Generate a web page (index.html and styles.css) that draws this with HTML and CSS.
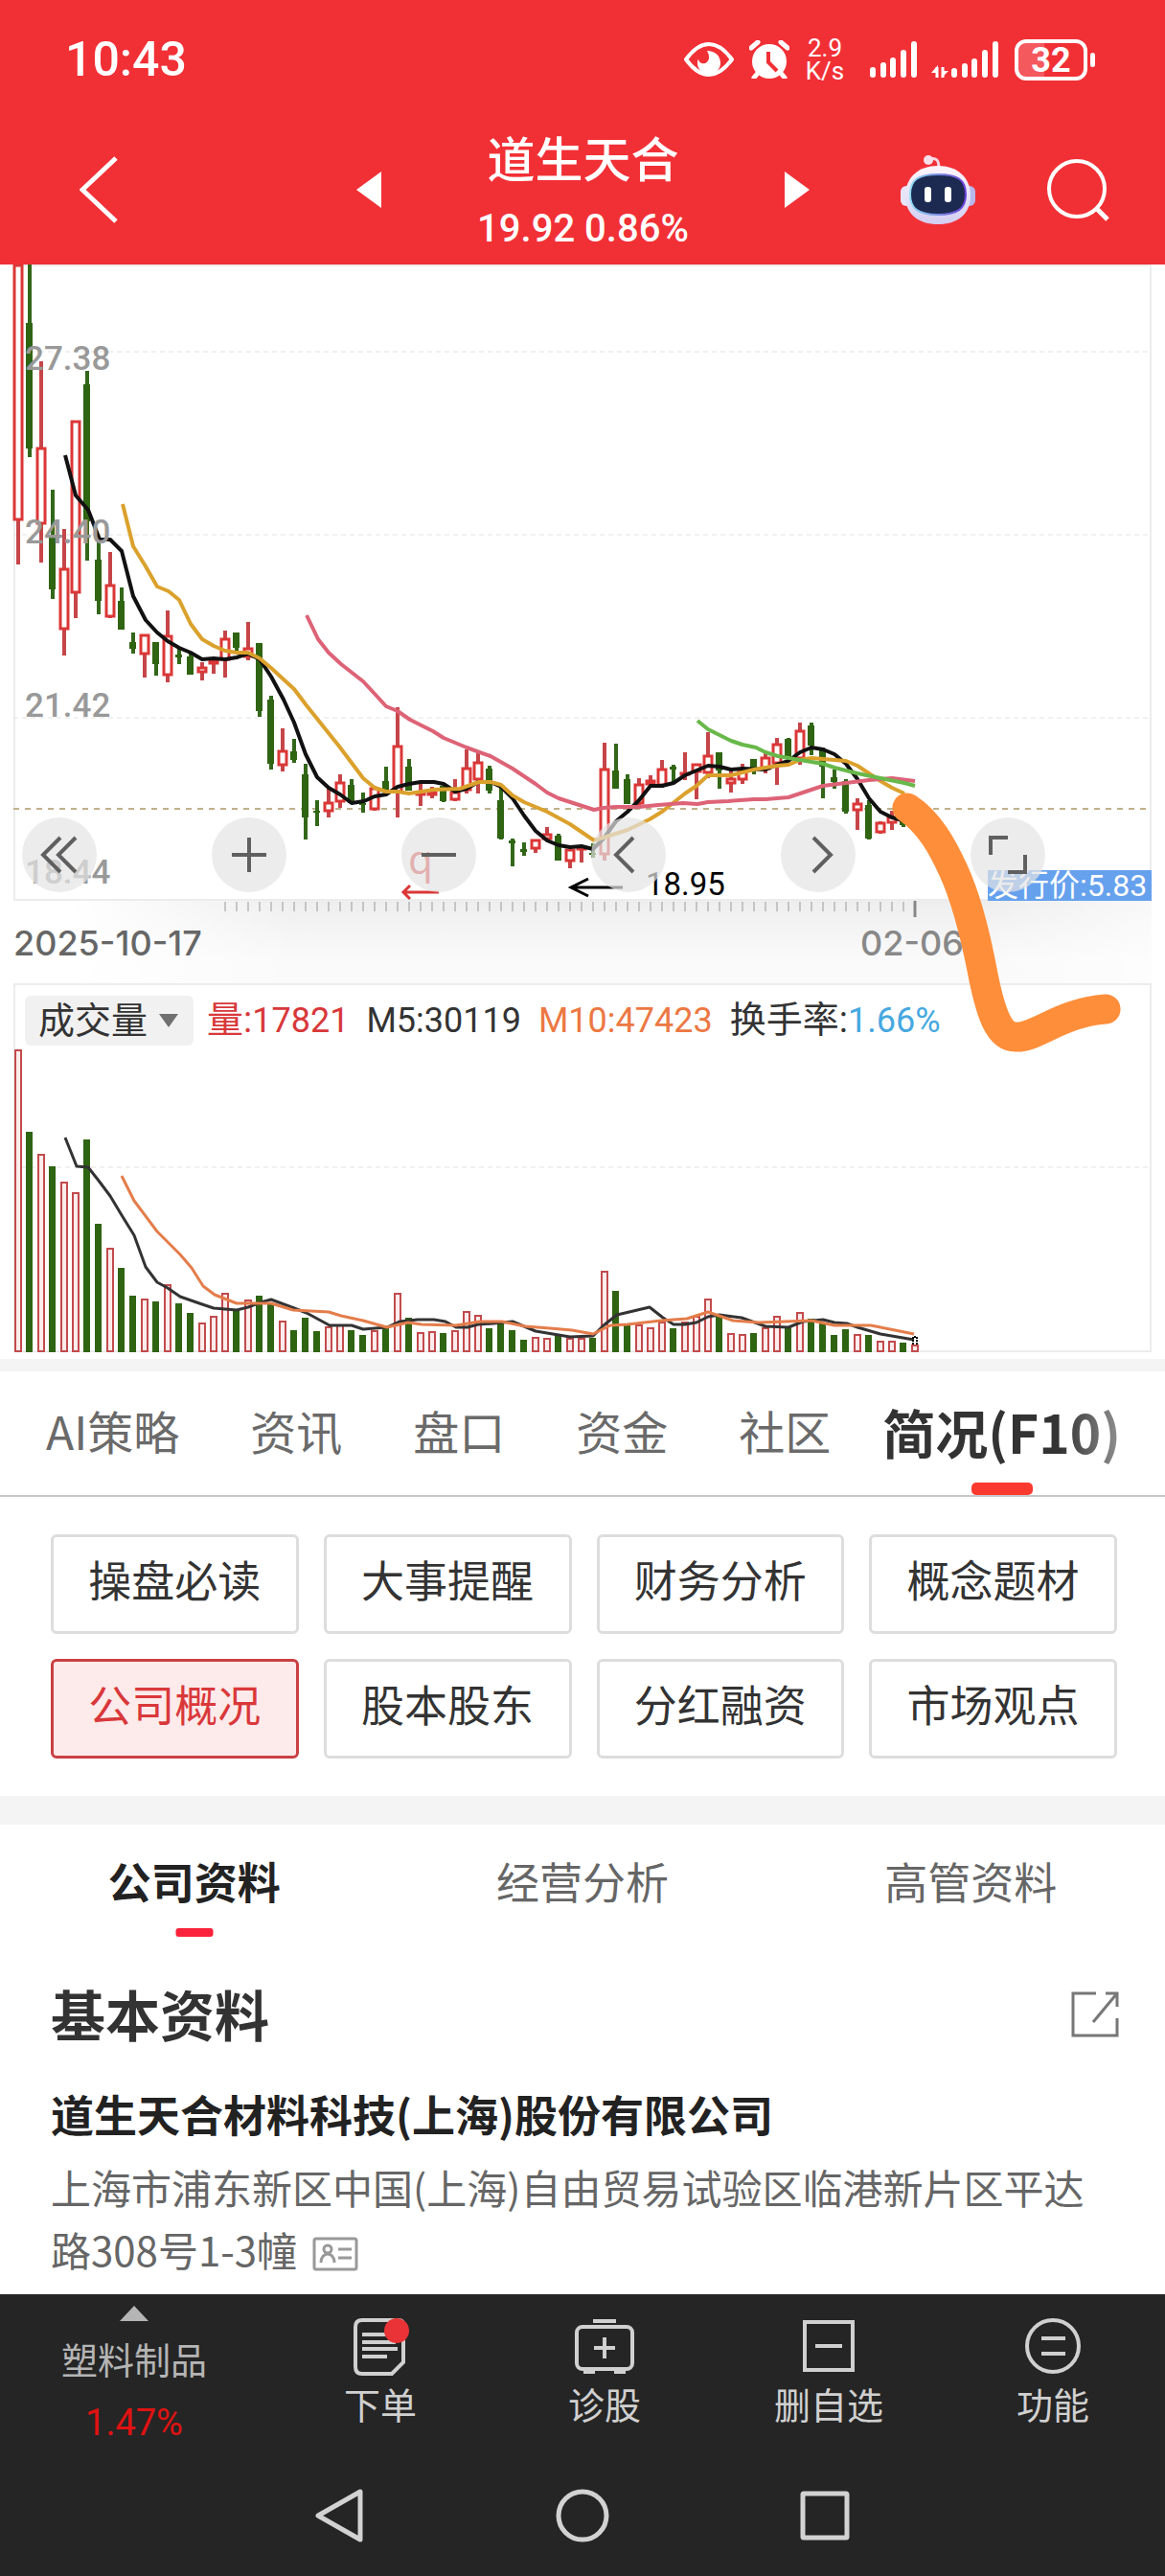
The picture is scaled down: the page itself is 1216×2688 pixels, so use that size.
FILE: index.html
```
<!DOCTYPE html>
<html lang="zh-CN">
<head>
  <meta charset="utf-8">
  <meta name="viewport" content="width=device-width, initial-scale=1">
  <title>道生天合</title>
  <link rel="stylesheet" href="styles.css">
</head>
<body>
  <header class="header">
    <div class="status-bar">
      <span class="status-time">10:43</span>
      <div class="status-icons">
        <svg class="icon-eye" width="52" height="36" viewBox="0 0 52 36">
          <path d="M2 18C10 7 17 2 26 2s16 5 24 16C42 29 35 34 26 34S10 29 2 18z" fill="none" stroke="#fff" stroke-width="4"/>
          <path d="M24 9c8 0 14 5 14 13 0 6-5 11-12 11S14 28 14 22c0-2 0-3 1-4 1 4 4 5 7 4 5-2 5-8 2-13z" fill="#fff"/>
        </svg>
        <svg class="icon-alarm" width="42" height="40" viewBox="0 0 42 40">
          <circle cx="21" cy="22" r="18" fill="#fff"/>
          <path d="M2 8l7-6M40 8l-7-6M10 33l-5 6M32 33l5 6" stroke="#fff" stroke-width="5" stroke-linecap="round"/>
          <path d="M20 12v11l9 9" fill="none" stroke="#f13036" stroke-width="4"/>
        </svg>
        <span class="net-speed">2.9<br>K/s</span>
        <svg class="icon-signal" width="50" height="40" viewBox="0 0 50 40">
          <path d="M3 31v5M14 26v10M24 21v15M35 13v23M46 4v32" stroke="#fff" stroke-width="6" stroke-linecap="round"/>
        </svg>
        <svg class="icon-signal" width="71" height="40" viewBox="0 0 71 40">
          <path d="M6 39V28M12 28v11" stroke="#fff" stroke-width="3"/>
          <path d="M0 34l7-8v8zM11 39l7-7h-7z" fill="#fff"/>
          <path d="M24 32v4M35 27v9M45 22v14M56 13v23M67 4v32" stroke="#fff" stroke-width="6" stroke-linecap="round"/>
        </svg>
        <span class="battery">32</span>
      </div>
    </div>
    <div class="title-bar">
      <button class="icon-button back" aria-label="返回">
        <svg width="40" height="70" viewBox="0 0 40 70"><path d="M38 2L3 35l35 33" fill="none" stroke="#fff" stroke-width="5"/></svg>
      </button>
      <div class="stock-switch">
        <button class="icon-button" aria-label="上一只"><svg width="26" height="38" viewBox="0 0 26 38"><path d="M26 0v38L0 19z" fill="#fff"/></svg></button>
        <div class="stock">
          <h1 class="stock-name">道生天合</h1>
          <p class="stock-price">19.92 0.86%</p>
        </div>
        <button class="icon-button" aria-label="下一只"><svg width="26" height="38" viewBox="0 0 26 38"><path d="M0 0v38l26-19z" fill="#fff"/></svg></button>
      </div>
      <div class="title-actions">
        <button class="icon-button" aria-label="智能助手">
          <svg width="78" height="74" viewBox="0 0 78 74">
            <defs>
              <linearGradient id="shell" x1="0" y1="0" x2="0" y2="1">
                <stop offset="0" stop-color="#fdf5fb"/>
                <stop offset="0.6" stop-color="#e2e0f8"/>
                <stop offset="1" stop-color="#d3cdf0"/>
              </linearGradient>
              <linearGradient id="rim" x1="0" y1="0" x2="1" y2="0">
                <stop offset="0" stop-color="#8fdcf2"/>
                <stop offset="1" stop-color="#6a3fd8"/>
              </linearGradient>
            </defs>
            <path d="M30 5c7-2 10 1 10 9" fill="none" stroke="#f6d6e4" stroke-width="3"/>
            <circle cx="29" cy="6" r="5" fill="#f8dfea"/>
            <rect x="0" y="33" width="14" height="21" rx="6" fill="#e8e4fa"/>
            <rect x="64" y="33" width="14" height="21" rx="6" fill="#b9b6ec"/>
            <path d="M39 12c20 0 34 12 34 31 0 20-14 30-34 30S5 63 5 43c0-19 14-31 34-31z" fill="url(#shell)"/>
            <path d="M39 21c20 0 29 5 29 21 0 15-9 21-29 21s-29-6-29-21c0-16 9-21 29-21z" fill="#1c2950" stroke="url(#rim)" stroke-width="2"/>
            <rect x="25" y="34" width="7" height="16" rx="3" fill="#fff"/>
            <rect x="46" y="34" width="7" height="16" rx="3" fill="#fff"/>
          </svg>
        </button>
        <button class="icon-button" aria-label="搜索">
          <svg width="66" height="66" viewBox="0 0 66 66"><circle cx="32" cy="32" r="29" fill="none" stroke="#fff" stroke-width="4"/><path d="M52 52l12 12" stroke="#fff" stroke-width="5"/></svg>
        </button>
      </div>
    </div>
  </header>

  <main>
    <section class="charts">
      <div class="plot">
        <svg id="priceChart" class="plot-svg" viewBox="14 276 1188 664">
          <g class="grid">
            <path d="M14 367H1202M14 558H1202M14 749H1202"/>
          </g>
          <path class="cost-line" d="M14 844H1202"/>
          <g id="candles"></g>
          <polyline class="line ma-black" points="68,475 79,517 92,532 104,563 115,563 127,575 139,622 152,647 164,660 175,669 187,676 199,681 211,688 223,687 235,688 247,686 259,682 271,688 283,706 296,730 307,754 319,787 331,811 343,822 355,829 367,838 380,836 391,831 403,829 415,821 427,818 439,816 453,816 463,818 475,826 487,823 499,816 512,816 523,821 535,833 547,851 559,867 571,877 583,882 595,884 607,883 619,886 630,875 643,857 655,847 667,835 679,820 691,820 703,817 715,809 727,804 739,799 751,800 763,803 775,802 799,803 811,798 823,794 835,785 847,780 859,782 871,787 883,797 895,813 907,833 919,847 931,853 942,856"/>
          <polyline class="line ma-gold" points="128,526 139,570 152,591 164,612 176,617 187,626 199,651 211,667 223,674 235,679 247,681 259,681 271,687 283,697 296,709 307,719 319,735 331,750 355,780 379,812 391,822 403,826 415,826 427,828 440,826 453,824 480,823 500,816 512,816 523,819 535,830 547,837 571,847 595,860 620,877 630,874 655,866 678,855 691,847 715,828 727,820 739,809 763,809 787,803 811,799 823,798 835,793 847,791 871,793 883,794 895,799 907,807 919,815 931,822 944,828"/>
          <polyline class="line ma-pink" points="320,642 332,667 343,681 356,693 379,711 392,725 403,737 415,742 428,751 452,763 463,770 487,780 512,789 535,802 559,818 571,827 583,833 620,845 630,843 643,842 667,842 687,840 713,838 728,839 739,837 760,836 787,834 799,834 823,832 835,828 859,820 883,817 907,814 931,812 955,815"/>
          <polyline class="line ma-green" points="728,752 739,761 751,767 763,773 775,777 789,780 799,785 812,789 835,793 859,797 871,801 895,807 919,812 944,817 955,820"/>
          <g class="scale">
            <text x="26" y="386">27.38</text>
            <text x="26" y="567">24.40</text>
            <text x="26" y="748">21.42</text>
            <text x="26" y="922">18.44</text>
          </g>
          <text class="mark-q" x="426" y="912">q</text>
          <path class="arrow arrow-red" d="M458 931H422M428 924l-7 7 7 7"/>
          <path class="arrow arrow-black" d="M650 926H597M614 917l-18 9 18 9"/>
          <text class="low-price" x="674" y="934">18.95</text>
          <rect x="1031" y="908" width="171" height="32" fill="#66a1ed"/>
          <text class="issue-price" x="1031" y="935">发行价:5.83</text>
        </svg>
        <div class="chart-controls">
          <button class="round-button" aria-label="最早"><svg width="40" height="40" viewBox="0 0 40 40"><path d="M21 2L3 20l18 18M37 2L19 20l18 18"/></svg></button>
          <button class="round-button" aria-label="放大"><svg width="40" height="40" viewBox="0 0 40 40"><path d="M2 20h36M20 2v36"/></svg></button>
          <button class="round-button" aria-label="缩小"><svg width="40" height="40" viewBox="0 0 40 40"><path d="M2 20h36"/></svg></button>
          <button class="round-button" aria-label="左移"><svg width="40" height="40" viewBox="0 0 40 40"><path d="M25 2L7 20l18 18"/></svg></button>
          <button class="round-button" aria-label="右移"><svg width="40" height="40" viewBox="0 0 40 40"><path d="M15 2l18 18-18 18"/></svg></button>
          <button class="round-button" aria-label="全屏"><svg width="40" height="40" viewBox="0 0 40 40"><path d="M2 20V2h18M38 20v18H20"/></svg></button>
        </div>
      </div>

      <div class="date-axis">
        <svg class="ticks" viewBox="14 940 1188 18"><g id="ticks"></g></svg>
        <span class="date-start">2025-10-17</span>
        <span class="date-end">02-06</span>
      </div>

      <div class="plot volume">
        <div class="volume-head">
          <span class="select-wrap">
            <select class="select" aria-label="指标">
              <option>成交量</option>
            </select>
          </span>
          <span class="stat up"><b>量:</b>17821</span>
          <span class="stat">M5:30119</span>
          <span class="stat m10">M10:47423</span>
          <span class="stat"><b>换手率:</b><i>1.66%</i></span>
        </div>
        <svg class="plot-svg" viewBox="14 1090 1188 320">
          <g class="grid"><path d="M14 1217H1202"/></g>
          <g id="volumes"></g>
          <polyline class="line vol-black" points="68,1186 80,1216 92,1217 103,1231 115,1247 127,1267 140,1288 152,1321 164,1337 175,1343 188,1352 211,1360 223,1364 247,1366 259,1363 272,1358 283,1355 307,1364 320,1369 344,1382 367,1382 379,1386 404,1384 417,1378 436,1376 453,1376 465,1378 476,1384 488,1384 499,1381 515,1380 535,1378 547,1383 559,1388 595,1394 619,1393 630,1382 644,1371 678,1363 692,1374 703,1381 715,1381 727,1379 739,1373 751,1371 774,1374 799,1383 823,1384 838,1378 859,1376 871,1379 884,1380 895,1384 919,1391 954,1397"/>
          <polyline class="line vol-orange" points="127,1226 140,1252 164,1284 188,1308 200,1322 212,1341 224,1350 247,1359 283,1359 306,1366 343,1368 356,1372 379,1377 404,1384 426,1379 440,1381 476,1382 501,1378 524,1378 548,1383 574,1385 597,1387 619,1391 637,1382 655,1381 690,1377 717,1375 739,1368 765,1377 792,1379 847,1377 871,1382 909,1382 954,1391"/>
          <path d="M953 1402v-8h4v8" fill="none" stroke="#000" stroke-width="2" stroke-dasharray="2 1"/>
        </svg>
      </div>

      <!-- hand drawn trend -->
      <svg class="doodle" viewBox="0 276 1216 1141">
        <path d="M947 843C970 858 984 884 995 908C1011 943 1020 985 1027 1022C1034 1055 1042 1082 1060 1082C1080 1084 1108 1056 1154 1053"/>
      </svg>
    </section>

    <nav class="tabs">
      <button class="tab">AI策略</button>
      <button class="tab">资讯</button>
      <button class="tab">盘口</button>
      <button class="tab">资金</button>
      <button class="tab">社区</button>
      <button class="tab active">简况(F10)</button>
    </nav>

    <div class="topics">
      <button class="topic">操盘必读</button>
      <button class="topic">大事提醒</button>
      <button class="topic">财务分析</button>
      <button class="topic">概念题材</button>
      <button class="topic active">公司概况</button>
      <button class="topic">股本股东</button>
      <button class="topic">分红融资</button>
      <button class="topic">市场观点</button>
    </div>

    <section class="company">
      <nav class="subtabs">
        <button class="subtab active">公司资料</button>
        <button class="subtab">经营分析</button>
        <button class="subtab">高管资料</button>
      </nav>
      <div class="section-head">
        <h2 class="section-title">基本资料</h2>
        <button class="icon-button" aria-label="分享">
          <svg width="50" height="48" viewBox="0 0 50 48"><path d="M26 2H2v44h46V28M36 2h12v14M48 2L23 32" fill="none" stroke="#777" stroke-width="3"/></svg>
        </button>
      </div>
      <h3 class="company-name">道生天合材料科技(上海)股份有限公司</h3>
      <p class="address">上海市浦东新区中国(上海)自由贸易试验区临港新片区平达路308号1-3幢
        <svg class="card-icon" width="48" height="36" viewBox="0 0 48 36" fill="none" stroke="#999" stroke-width="3">
          <rect x="2" y="2" width="44" height="32" rx="2"/>
          <circle cx="16" cy="13" r="4"/>
          <path d="M9 27c0-12 14-12 14 0M27 13h14M27 22h14"/>
        </svg>
      </p>
    </section>
  </main>

  <footer class="footer">
    <div class="toolbar">
      <button class="tool sector">
        <svg width="30" height="16" viewBox="0 0 30 16"><path d="M15 0l15 16H0z" fill="#b5b5b5"/></svg>
        <span>塑料制品</span>
        <span class="sector-change">1.47%</span>
      </button>
      <button class="tool">
        <svg width="60" height="60" viewBox="0 0 60 60">
          <path d="M11 2h38q5 0 5 5v39L42 58H11q-7 0-7-7V9q0-7 7-7z"/>
          <path d="M11 17h27M11 25h35M11 32h37M11 40h26"/>
          <circle class="dot" cx="47" cy="13" r="13"/>
        </svg>
        <span>下单</span>
      </button>
      <button class="tool">
        <svg width="62" height="60" viewBox="0 0 62 60">
          <rect x="2" y="9" width="58" height="44" rx="6"/>
          <path d="M19 3h24M31 20v22M20 31h22M9 56h12M41 56h12"/>
        </svg>
        <span>诊股</span>
      </button>
      <button class="tool">
        <svg width="54" height="60" viewBox="0 0 54 60"><rect x="2" y="4" width="50" height="50"/><path d="M13 29h28"/></svg>
        <span>删自选</span>
      </button>
      <button class="tool">
        <svg width="58" height="60" viewBox="0 0 58 60"><circle cx="29" cy="29" r="27"/><path d="M17 21h25M17 37h25"/></svg>
        <span>功能</span>
      </button>
    </div>
    <div class="system-nav">
      <button class="icon-button" aria-label="系统返回"><svg width="56" height="56" viewBox="0 0 56 56"><path d="M49 3v50L5 28z"/></svg></button>
      <button class="icon-button" aria-label="主屏幕"><svg width="56" height="56" viewBox="0 0 56 56"><circle cx="28" cy="28" r="25"/></svg></button>
      <button class="icon-button" aria-label="最近任务"><svg width="56" height="56" viewBox="0 0 56 56"><rect x="5" y="5" width="46" height="46" rx="1"/></svg></button>
    </div>
  </footer>

  <script src="chart.js"></script>
</body>
</html>
```
FILE: styles.css
```
* {
  margin: 0;
  padding: 0;
  box-sizing: border-box;
}

body {
  display: flex;
  flex-direction: column;
  min-height: 100vh;
  background-color: #ffffff;
  color: #333333;
  font-family: Roboto, "Noto Sans CJK SC", sans-serif;
}

button,
select {
  border: none;
  background: none;
  color: inherit;
  font-family: inherit;
  cursor: pointer;
}

svg {
  display: block;
}

.icon-button {
  display: flex;
  align-items: center;
  justify-content: center;
}

/* Header */
.header {
  background-color: #f13036;
  color: #ffffff;
}

.status-bar {
  display: flex;
  align-items: center;
  justify-content: space-between;
  height: 124px;
  padding: 0 81px 0 68px;
}

.status-time {
  font-size: 50px;
  font-weight: 500;
}

.status-icons {
  display: flex;
  align-items: center;
}

.icon-alarm {
  margin-left: 16px;
}

.net-speed {
  width: 42px;
  margin-left: 16px;
  margin-right: 2px;
  font-size: 26px;
  line-height: 24px;
  text-align: center;
}

.icon-signal {
  margin-left: 24px;
}

.icon-signal + .icon-signal {
  margin-left: 14px;
}

.battery {
  position: relative;
  width: 76px;
  height: 43px;
  margin-left: 16px;
  border: 4px solid #ffffff;
  border-radius: 12px;
  background: linear-gradient(to right, rgba(255, 255, 255, 0.2) 40%, transparent 40%);
  font-size: 36px;
  font-weight: 700;
  line-height: 36px;
  text-align: center;
}

.battery::after {
  content: '';
  position: absolute;
  top: 10px;
  right: -12px;
  width: 5px;
  height: 15px;
  border-radius: 3px;
  background-color: #ffffff;
}

.title-bar {
  display: grid;
  grid-template-columns: 1fr 474px 1fr;
  align-items: center;
  height: 152px;
  padding: 0 58px 4px 83px;
}

.back {
  justify-self: start;
}

.stock-switch {
  display: flex;
  align-items: center;
  justify-content: space-between;
  margin-left: -12px;
  margin-right: 12px;
}

.stock {
  padding-top: 8px;
  text-align: center;
}

.stock-name {
  font-size: 50px;
  font-weight: 500;
  line-height: 66px;
}

.stock-price {
  margin-top: 8px;
  font-size: 40px;
  font-weight: 500;
  line-height: 60px;
}

.title-actions {
  display: flex;
  align-items: center;
  justify-content: flex-end;
  gap: 74px;
}

/* Charts */
.charts {
  position: relative;
  padding: 0 14px 7px;
  border-bottom: 13px solid #f4f4f4;
}

.plot {
  position: relative;
  box-shadow: inset 0 0 0 2px #ececec;
}

.plot-svg {
  width: 100%;
  height: auto;
  overflow: visible;
}

.grid path {
  fill: none;
  stroke: #e2e2e2;
  stroke-dasharray: 5 4;
}

.cost-line {
  stroke: #c0b08c;
  stroke-width: 2;
  stroke-dasharray: 6 6;
}

.line {
  fill: none;
  stroke-width: 3;
  stroke-linejoin: round;
}

.ma-black,
.ma-gold,
.ma-pink,
.ma-green {
  stroke-width: 4;
}

.ma-black { stroke: #111111; }
.ma-gold { stroke: #dba12c; }
.ma-pink { stroke: #dd6377; }
.ma-green { stroke: #68b84a; }
.vol-black { stroke: #333333; }
.vol-orange { stroke: #e47d4b; }

.wick-up { stroke: #c64549; stroke-width: 4; }
.wick-down { stroke: #33671a; stroke-width: 4; }
.body-up { fill: #ffffff; stroke: #db3737; stroke-width: 3; }
.body-down { fill: #2f6412; }
.vol-up { fill: #fdecec; stroke: #c24b4d; stroke-width: 2; }

.scale text {
  fill: #999999;
  font-size: 35px;
  font-weight: 500;
}

.mark-q {
  fill: #db3737;
  font-family: "Noto Sans", sans-serif;
  font-size: 42px;
}

.arrow {
  fill: none;
  stroke-width: 3;
}

.arrow-red { stroke: #db3737; }
.arrow-black { stroke: #000000; }

.low-price {
  fill: #000000;
  font-size: 33px;
}

.issue-price {
  fill: #ffffff;
  font-size: 32px;
}

.chart-controls {
  position: absolute;
  left: 9px;
  right: 111px;
  bottom: 9px;
  display: flex;
  justify-content: space-between;
}

.round-button {
  display: flex;
  align-items: center;
  justify-content: center;
  width: 78px;
  height: 78px;
  border-radius: 50%;
  background-color: rgba(228, 228, 228, 0.7);
}

.round-button svg {
  fill: none;
  stroke: #606060;
  stroke-width: 4;
}

.date-axis {
  position: relative;
  display: flex;
  justify-content: space-between;
  height: 86px;
  padding-right: 196px;
  background:
    linear-gradient(to right, #ffffff 5%, transparent 25%, transparent 85%, rgba(255, 255, 255, 0.6)),
    linear-gradient(to bottom, #eeeeee, #fafafa 70%);
  font-size: 36px;
  font-weight: 500;
  line-height: 88px;
}

.ticks {
  position: absolute;
  top: 0;
  left: 0;
  width: 100%;
}

.ticks path {
  stroke: #999999;
}

.ticks .major {
  stroke: #888888;
  stroke-width: 3;
}

.date-start,
.date-end {
  font-family: Inter, sans-serif;
}

.date-start { color: #666666; }
.date-end { color: #888888; }

.volume-head {
  display: flex;
  align-items: center;
  gap: 18px;
  padding: 12px 12px 0;
}

.select-wrap {
  position: relative;
}

.select-wrap::after {
  content: '';
  position: absolute;
  top: 19px;
  right: 16px;
  border: 10px solid transparent;
  border-top: 14px solid #707070;
  border-bottom: none;
  pointer-events: none;
}

.select {
  display: block;
  width: 176px;
  height: 52px;
  padding-left: 14px;
  border-radius: 6px;
  background-color: #f1f1f1;
  appearance: none;
  font-size: 38px;
  line-height: 52px;
}

.stat {
  font-size: 36px;
  line-height: 52px;
  white-space: nowrap;
}

.stat.up {
  margin-left: -4px;
}

.stat b {
  font-size: 38px;
  font-weight: 400;
}

.stat i {
  color: #46a8e0;
  font-style: normal;
}

.up { color: #d8383a; }
.m10 { color: #ec7843; }

.doodle {
  position: absolute;
  top: 0;
  left: 0;
  width: 100%;
  pointer-events: none;
}

.doodle path {
  fill: none;
  stroke: #ff8e3a;
  stroke-width: 31;
  stroke-linecap: round;
}

/* Main tabs */
.tabs {
  position: relative;
  display: flex;
  gap: 34px;
  height: 131px;
  padding: 0 28px;
  border-bottom: 2px solid #c8c8c8;
  font-family: "Noto Sans CJK SC", sans-serif;
}

.tabs::after {
  content: '';
  position: absolute;
  top: 0;
  right: 0;
  width: 110px;
  height: 110px;
  background: linear-gradient(to right, transparent, rgba(255, 255, 255, 0.8));
  pointer-events: none;
}

.tab {
  position: relative;
  padding: 0 20px 8px;
  color: #6a6a6a;
  font-size: 48px;
  white-space: nowrap;
}

.tab.active {
  padding: 0 0 6px;
  color: #333333;
  font-size: 55px;
  font-weight: 700;
}

.tab.active::after,
.subtab.active::after {
  content: '';
  position: absolute;
  left: 50%;
  transform: translateX(-50%);
}

.tab.active::after {
  bottom: 0;
  width: 64px;
  height: 13px;
  border-radius: 5px;
  background-color: #fb3a2f;
}

/* Topic buttons */
.topics {
  display: grid;
  grid-template-columns: repeat(4, 1fr);
  gap: 26px;
  padding: 39px 50px 39px 53px;
  border-bottom: 30px solid #f4f4f4;
}

.topic {
  height: 104px;
  padding-bottom: 12px;
  border: 3px solid #dddddd;
  border-radius: 6px;
  font-family: "Noto Sans CJK SC", sans-serif;
  font-size: 45px;
}

.topic.active {
  border-color: #c94043;
  background-color: #fdeaea;
  color: #d9383b;
}

/* Company profile */
.company {
  padding-bottom: 15px;
}

.subtabs {
  display: grid;
  grid-template-columns: repeat(3, 1fr);
  height: 124px;
}

.subtab {
  position: relative;
  padding-bottom: 8px;
  color: #666666;
  font-size: 45px;
}

.subtab.active {
  color: #222222;
  font-weight: 700;
}

.subtab.active::after {
  bottom: 7px;
  width: 39px;
  height: 9px;
  border-radius: 3px;
  background-color: #fa233b;
}

.section-head {
  display: flex;
  align-items: center;
  justify-content: space-between;
  height: 148px;
  padding: 0 48px 0 53px;
}

.section-title {
  padding-bottom: 4px;
  font-size: 57px;
  font-weight: 700;
}

.company-name {
  padding: 0 53px;
  color: #222222;
  font-family: "Noto Sans CJK SC", sans-serif;
  font-size: 45px;
  font-weight: 700;
  line-height: 60px;
}

.address {
  margin-top: 13px;
  padding: 0 50px 0 53px;
  color: #666666;
  font-family: "Noto Sans CJK SC", sans-serif;
  font-size: 42px;
  line-height: 65px;
}

.card-icon {
  display: inline-block;
  margin-left: 6px;
  vertical-align: -5px;
}

/* Bottom bars */
.footer {
  flex: 1;
  background-color: #252525;
  color: #d0d0d0;
}

.toolbar {
  display: grid;
  grid-template-columns: 280fr 234fr 234fr 234fr 234fr;
  height: 166px;
}

.tool {
  display: flex;
  flex-direction: column;
  align-items: center;
  gap: 10px;
  padding-top: 25px;
  font-size: 38px;
  line-height: 44px;
}

.tool svg {
  fill: none;
  stroke: #d0d0d0;
  stroke-width: 4;
}

.tool .dot {
  fill: #ea3336;
  stroke: none;
}

.sector {
  gap: 20px;
  padding-top: 12px;
  color: #b5b5b5;
}

.sector svg {
  stroke: none;
}

.sector-change {
  color: #e01212;
}

.system-nav {
  display: flex;
  justify-content: center;
  gap: 197px;
  padding-top: 37px;
}

.system-nav svg {
  fill: none;
  stroke: #d2d2d2;
  stroke-width: 5;
  stroke-linejoin: round;
}
```
FILE: chart.js
```
// one row per day: direction, high, body top, body bottom, low, volume top
const days = [
  ['r', 276, 276, 544, 589, 1094], ['g', 276, 337, 468, 477, 1180], ['r', 377, 467, 548, 587, 1203],
  ['g', 511, 560, 615, 625, 1216], ['r', 552, 593, 658, 684, 1232], ['r', 439, 439, 620, 645, 1243],
  ['g', 387, 401, 544, 585, 1188], ['g', 566, 584, 627, 641, 1276], ['r', 576, 610, 645, 645, 1301],
  ['g', 613, 627, 657, 657, 1322], ['g', 660, 670, 677, 682, 1351], ['r', 662, 662, 684, 707, 1354],
  ['g', 670, 670, 693, 705, 1357], ['r', 637, 663, 706, 712, 1339], ['g', 677, 683, 686, 693, 1359],
  ['g', 681, 685, 704, 704, 1369], ['r', 691, 696, 703, 710, 1379], ['r', 687, 688, 694, 703, 1372],
  ['r', 658, 666, 690, 707, 1348], ['g', 660, 660, 676, 682, 1366], ['r', 649, 676, 687, 689, 1355],
  ['g', 671, 671, 742, 748, 1351], ['g', 726, 730, 797, 803, 1359], ['r', 760, 783, 800, 805, 1377],
  ['g', 771, 784, 793, 796, 1387], ['g', 797, 808, 853, 876, 1374], ['g', 835, 846, 848, 862, 1388],
  ['r', 823, 837, 848, 853, 1383], ['r', 808, 816, 838, 843, 1381], ['g', 813, 819, 838, 838, 1387],
  ['g', 827, 838, 840, 848, 1392], ['r', 820, 822, 846, 846, 1387], ['g', 800, 815, 826, 826, 1385],
  ['r', 738, 778, 828, 853, 1348], ['g', 792, 800, 825, 825, 1374], ['r', 818, 827, 831, 841, 1389],
  ['r', 821, 826, 831, 833, 1388], ['g', 820, 820, 836, 837, 1390], ['r', 813, 826, 836, 836, 1387],
  ['r', 782, 801, 826, 828, 1367], ['r', 786, 795, 815, 828, 1371], ['g', 799, 802, 825, 828, 1385],
  ['g', 818, 835, 875, 876, 1379], ['g', 875, 877, 880, 904, 1387], ['g', 879, 886, 889, 893, 1397],
  ['r', 876, 876, 887, 890, 1394], ['r', 863, 870, 877, 878, 1395], ['g', 870, 872, 898, 898, 1392],
  ['r', 886, 886, 900, 906, 1395], ['r', 883, 884, 888, 900, 1395], ['g', 880, 890, 892, 895, 1395],
  ['r', 775, 802, 893, 898, 1325], ['g', 776, 804, 823, 823, 1346], ['g', 808, 813, 839, 839, 1381],
  ['r', 812, 818, 840, 843, 1381], ['r', 809, 814, 820, 820, 1384], ['r', 793, 802, 821, 822, 1378],
  ['g', 798, 800, 803, 816, 1385], ['r', 785, 806, 810, 814, 1378], ['r', 797, 797, 807, 834, 1372],
  ['r', 764, 788, 808, 812, 1354], ['g', 785, 785, 804, 823, 1370], ['r', 804, 812, 819, 827, 1390],
  ['r', 797, 804, 815, 818, 1391], ['g', 792, 792, 803, 808, 1390], ['r', 785, 790, 804, 807, 1384],
  ['r', 770, 776, 798, 819, 1372], ['g', 770, 771, 790, 790, 1384], ['r', 754, 762, 793, 798, 1368],
  ['g', 754, 757, 778, 788, 1375], ['g', 780, 783, 800, 833, 1380], ['g', 803, 811, 816, 823, 1392],
  ['g', 813, 815, 847, 849, 1386], ['r', 833, 838, 847, 866, 1391], ['g', 835, 840, 875, 876, 1392],
  ['r', 857, 858, 870, 870, 1398], ['r', 846, 852, 860, 866, 1398], ['g', 850, 854, 861, 863, 1400],
  ['r', 845, 848, 854, 856, 1402]
];

const STEP = 12;
const FIRST_X = 19;
const BASE = 1410;

let candles = '';
let volumes = '';

days.forEach(([dir, high, top, bottom, low, vol], i) => {
  const x = FIRST_X + i * STEP;
  if (dir === 'r') {
    const h = Math.max(bottom - top - 3, 1);
    candles += `<path class="wick-up" d="M${x} ${high}V${low}"/>`;
    candles += `<rect class="body-up" x="${x - 4}" y="${top + 1}" width="8" height="${h}"/>`;
    volumes += `<rect class="vol-up" x="${x - 3}" y="${vol + 1}" width="6" height="${BASE - vol - 2}"/>`;
  } else {
    candles += `<path class="wick-down" d="M${x} ${high}V${low}"/>`;
    candles += `<rect class="body-down" x="${x - 4}" y="${top}" width="7" height="${bottom - top}"/>`;
    volumes += `<rect class="body-down" x="${x - 4}" y="${vol}" width="7" height="${BASE - vol}"/>`;
  }
});

document.getElementById('candles').innerHTML = candles;
document.getElementById('volumes').innerHTML = volumes;

// day ticks under the price chart, long one closes the range
let ticks = '';
for (let x = 235; x < 955; x += STEP) {
  ticks += `<path d="M${x} 941v10"/>`;
}
ticks += '<path class="major" d="M955 940v17"/>';
document.getElementById('ticks').innerHTML = ticks;
```
